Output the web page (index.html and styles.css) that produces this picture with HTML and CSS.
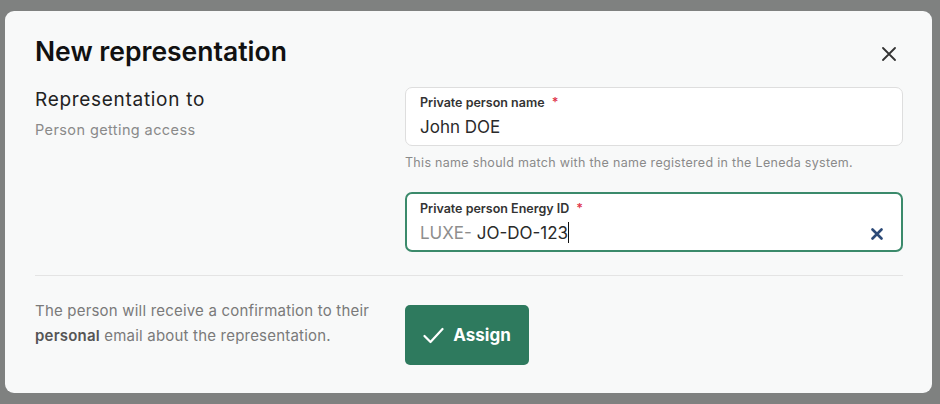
FILE: index.html
```html
<!DOCTYPE html>
<html lang="en">

<head>
    <meta charset="UTF-8">
    <meta name="viewport" content="width=device-width, initial-scale=1.0">
    <title>New representation</title>
    <link rel="stylesheet" href="styles.css">
</head>

<body>
    <div class="dialog">
        <div class="dialog-header">
            <h1 class="dialog-title">New representation</h1>
            <button class="close-btn" aria-label="Close">
                <svg width="14" height="14" viewBox="0 0 14 14">
                    <path d="M1 1 L13 13 M13 1 L1 13" stroke="#333" stroke-width="1.8" stroke-linecap="round" fill="none"/>
                </svg>
            </button>
        </div>

        <div class="dialog-body">
            <div class="section-info">
                <div class="section-title">Representation to</div>
                <div class="section-sub">Person getting access</div>
            </div>

            <div class="fields">
                <div class="field">
                    <label class="field-label">Private person name <span class="req">*</span></label>
                    <div class="field-value">John DOE</div>
                </div>
                <div class="field-help">This name should match with the name registered in the Leneda system.</div>

                <div class="field field-focus">
                    <label class="field-label">Private person Energy ID <span class="req">*</span></label>
                    <div class="field-row">
                        <div class="field-value"><span class="prefix">LUXE-</span> JO-DO-123<span class="caret"></span></div>
                        <svg class="clear-icon" width="12" height="12" viewBox="0 0 12 12">
                            <path d="M1.5 1.5 L10.5 10.5 M10.5 1.5 L1.5 10.5" stroke="#2c4a78" stroke-width="2.6" stroke-linecap="round" fill="none"/>
                        </svg>
                    </div>
                </div>
            </div>
        </div>

        <div class="divider"></div>

        <div class="dialog-footer">
            <p class="footer-note">The person will receive a confirmation to their <b>personal</b> email about the representation.</p>
            <button class="assign-btn">
                <svg width="21" height="17" viewBox="0 0 21 17">
                    <path d="M1.5 9 L7.5 15 L19.5 2" stroke="#fff" stroke-width="2.2" stroke-linecap="round" stroke-linejoin="round" fill="none"/>
                </svg>
                Assign
            </button>
        </div>
    </div>
</body>

</html>
```

FILE: styles.css
```css
body {
    margin: 0;
    background-color: #7f8180;
    font-family: 'Inter', 'Liberation Sans', sans-serif;
    height: 404px;
    overflow: hidden;
}

.dialog {
    background-color: #f8f9f9;
    margin: 11px 8px 0 5px;
    height: 382px;
    box-sizing: border-box;
    border-radius: 9px;
    padding: 23px 29px 28px 30px;
    color: #1c1c1c;
}

.dialog-header {
    display: flex;
    justify-content: space-between;
    align-items: flex-start;
    margin-bottom: 19px;
}

.dialog-title {
    margin: 0;
    font-size: 26.5px;
    line-height: 34px;
    font-weight: 600;
    color: #111;
}

.close-btn {
    width: 28px;
    height: 28px;
    margin-top: 6px;
    padding: 0;
    border: none;
    background: none;
    display: flex;
    align-items: center;
    justify-content: center;
    cursor: pointer;
}

.dialog-body {
    display: grid;
    grid-template-columns: 370px 1fr;
}

.section-title {
    font-size: 19px;
    line-height: 24px;
    letter-spacing: 0.7px;
    color: #222;
    padding-top: 1px;
}

.section-sub {
    margin-top: 8px;
    font-size: 14.5px;
    line-height: 20px;
    letter-spacing: 0.4px;
    color: #8a8a8a;
}

.field {
    background-color: #fff;
    border: 1px solid #dedede;
    border-radius: 7px;
    padding: 7px 15px 6px 14px;
}

.field-focus {
    border: 2px solid #3b8a6b;
    padding: 7px 18px 5px 13px;
    margin-top: 20px;
}

.field-label {
    display: block;
    font-size: 12.5px;
    line-height: 16px;
    font-weight: 600;
    color: #333;
    margin-bottom: 4px;
}

.req {
    color: #e0344a;
    margin-left: 4px;
}

.field-value {
    font-size: 17px;
    line-height: 24px;
    color: #2a2a2a;
}

.field-row {
    display: flex;
    justify-content: space-between;
    align-items: center;
}

.prefix {
    color: #8e8e8e;
}

.caret {
    display: inline-block;
    width: 1px;
    height: 21px;
    background-color: #111;
    vertical-align: -4px;
}

.clear-icon {
    margin-top: 2px;
}

.field-help {
    margin-top: 8px;
    font-size: 12.5px;
    line-height: 18px;
    letter-spacing: 0.3px;
    color: #8a8a8a;
}

.divider {
    height: 1px;
    background-color: #e4e4e4;
    margin-top: 23px;
}

.dialog-footer {
    display: grid;
    grid-template-columns: 370px 1fr;
    align-items: start;
    padding-top: 22px;
}

.footer-note {
    margin: 0;
    font-size: 15px;
    line-height: 25px;
    letter-spacing: 0.2px;
    color: #7a7a7a;
}

.footer-note b {
    color: #555;
    font-weight: 600;
}

.assign-btn {
    margin-top: 7px;
    width: 124px;
    height: 60px;
    background-color: #2e7a5e;
    color: #fff;
    border: none;
    border-radius: 5px;
    font-family: inherit;
    font-size: 17px;
    font-weight: 700;
    display: flex;
    align-items: center;
    justify-content: center;
    gap: 9px;
    cursor: pointer;
}
```
